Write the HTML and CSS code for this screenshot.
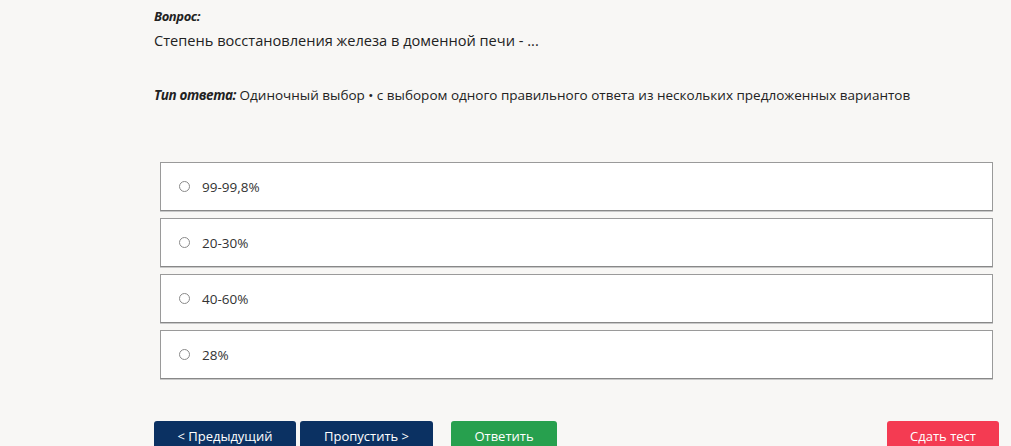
FILE: index.html
```html
<!DOCTYPE html>
<html lang="ru">
<head>
<meta charset="utf-8">
<link rel="stylesheet" href="styles.css">
</head>
<body>
<div class="page">
  <div class="label">Вопрос:</div>
  <div class="question">Степень восстановления железа в доменной печи - ...</div>
  <div class="type"><span class="type-label">Тип ответа:</span> Одиночный выбор • с выбором одного правильного ответа из нескольких предложенных вариантов</div>
  <div class="options">
    <label class="option"><span class="radio"></span><span class="opt-text">99-99,8%</span></label>
    <label class="option"><span class="radio"></span><span class="opt-text">20-30%</span></label>
    <label class="option"><span class="radio"></span><span class="opt-text">40-60%</span></label>
    <label class="option"><span class="radio"></span><span class="opt-text">28%</span></label>
  </div>
  <div class="buttons">
    <button class="btn btn-navy btn-prev">&lt; Предыдущий</button>
    <button class="btn btn-navy btn-skip">Пропустить &gt;</button>
    <button class="btn btn-green btn-answer">Ответить</button>
    <span class="spacer"></span>
    <button class="btn btn-red btn-submit">Сдать тест</button>
  </div>
</div>
</body>
</html>
```

FILE: styles.css
```css
html, body {
  margin: 0;
  padding: 0;
  background: #f8f7f5;
  overflow: hidden;
}
body {
  font-family: "Open Sans", "Liberation Sans", sans-serif;
  color: #222;
}
.page {
  width: 845px;
  margin-left: 154px;
  padding-top: 7px;
}
.label {
  font-size: 13px;
  font-weight: 700;
  font-style: italic;
  color: #222;
  line-height: 18px;
  letter-spacing: -0.4px;
}
.question {
  font-size: 14.6px;
  line-height: 20px;
  margin-top: 5px;
  color: #222;
}
.type {
  font-size: 13.5px;
  line-height: 18px;
  margin-top: 36px;
  color: #222;
}
.type-label {
  font-weight: 700;
  font-style: italic;
  letter-spacing: -0.4px;
}
.options {
  margin: 58px 6px 0 6px;
  display: flex;
  flex-direction: column;
  gap: 7px;
}
.option {
  display: flex;
  align-items: center;
  height: 47px;
  background: #fff;
  border: 1px solid #9a9a9a;
  border-bottom-color: #888;
  box-shadow: 0 1px 0 #c8c8c8;
  padding-left: 18px;
  box-sizing: content-box;
}
.radio {
  width: 9px;
  height: 9px;
  border: 1px solid #8a8a8a;
  border-radius: 50%;
  background: #fff;
}
.opt-text {
  margin-left: 12px;
  font-size: 13.5px;
  color: #333;
}
.buttons {
  display: flex;
  margin-top: 42px;
  align-items: flex-start;
}
.btn {
  border: none;
  border-radius: 3px;
  color: #fff;
  font-family: "Open Sans", "Liberation Sans", sans-serif;
  font-size: 13px;
  height: 30px;
  padding: 0;
  cursor: pointer;
}
.btn-navy { background: #0b3162; }
.btn-green { background: #27a04e; }
.btn-red { background: #f43b52; }
.btn-prev { width: 142px; }
.btn-skip { width: 133px; margin-left: 4px; }
.btn-answer { width: 106px; margin-left: 18px; }
.spacer { flex: 1; }
.btn-submit { width: 112px; }
```
